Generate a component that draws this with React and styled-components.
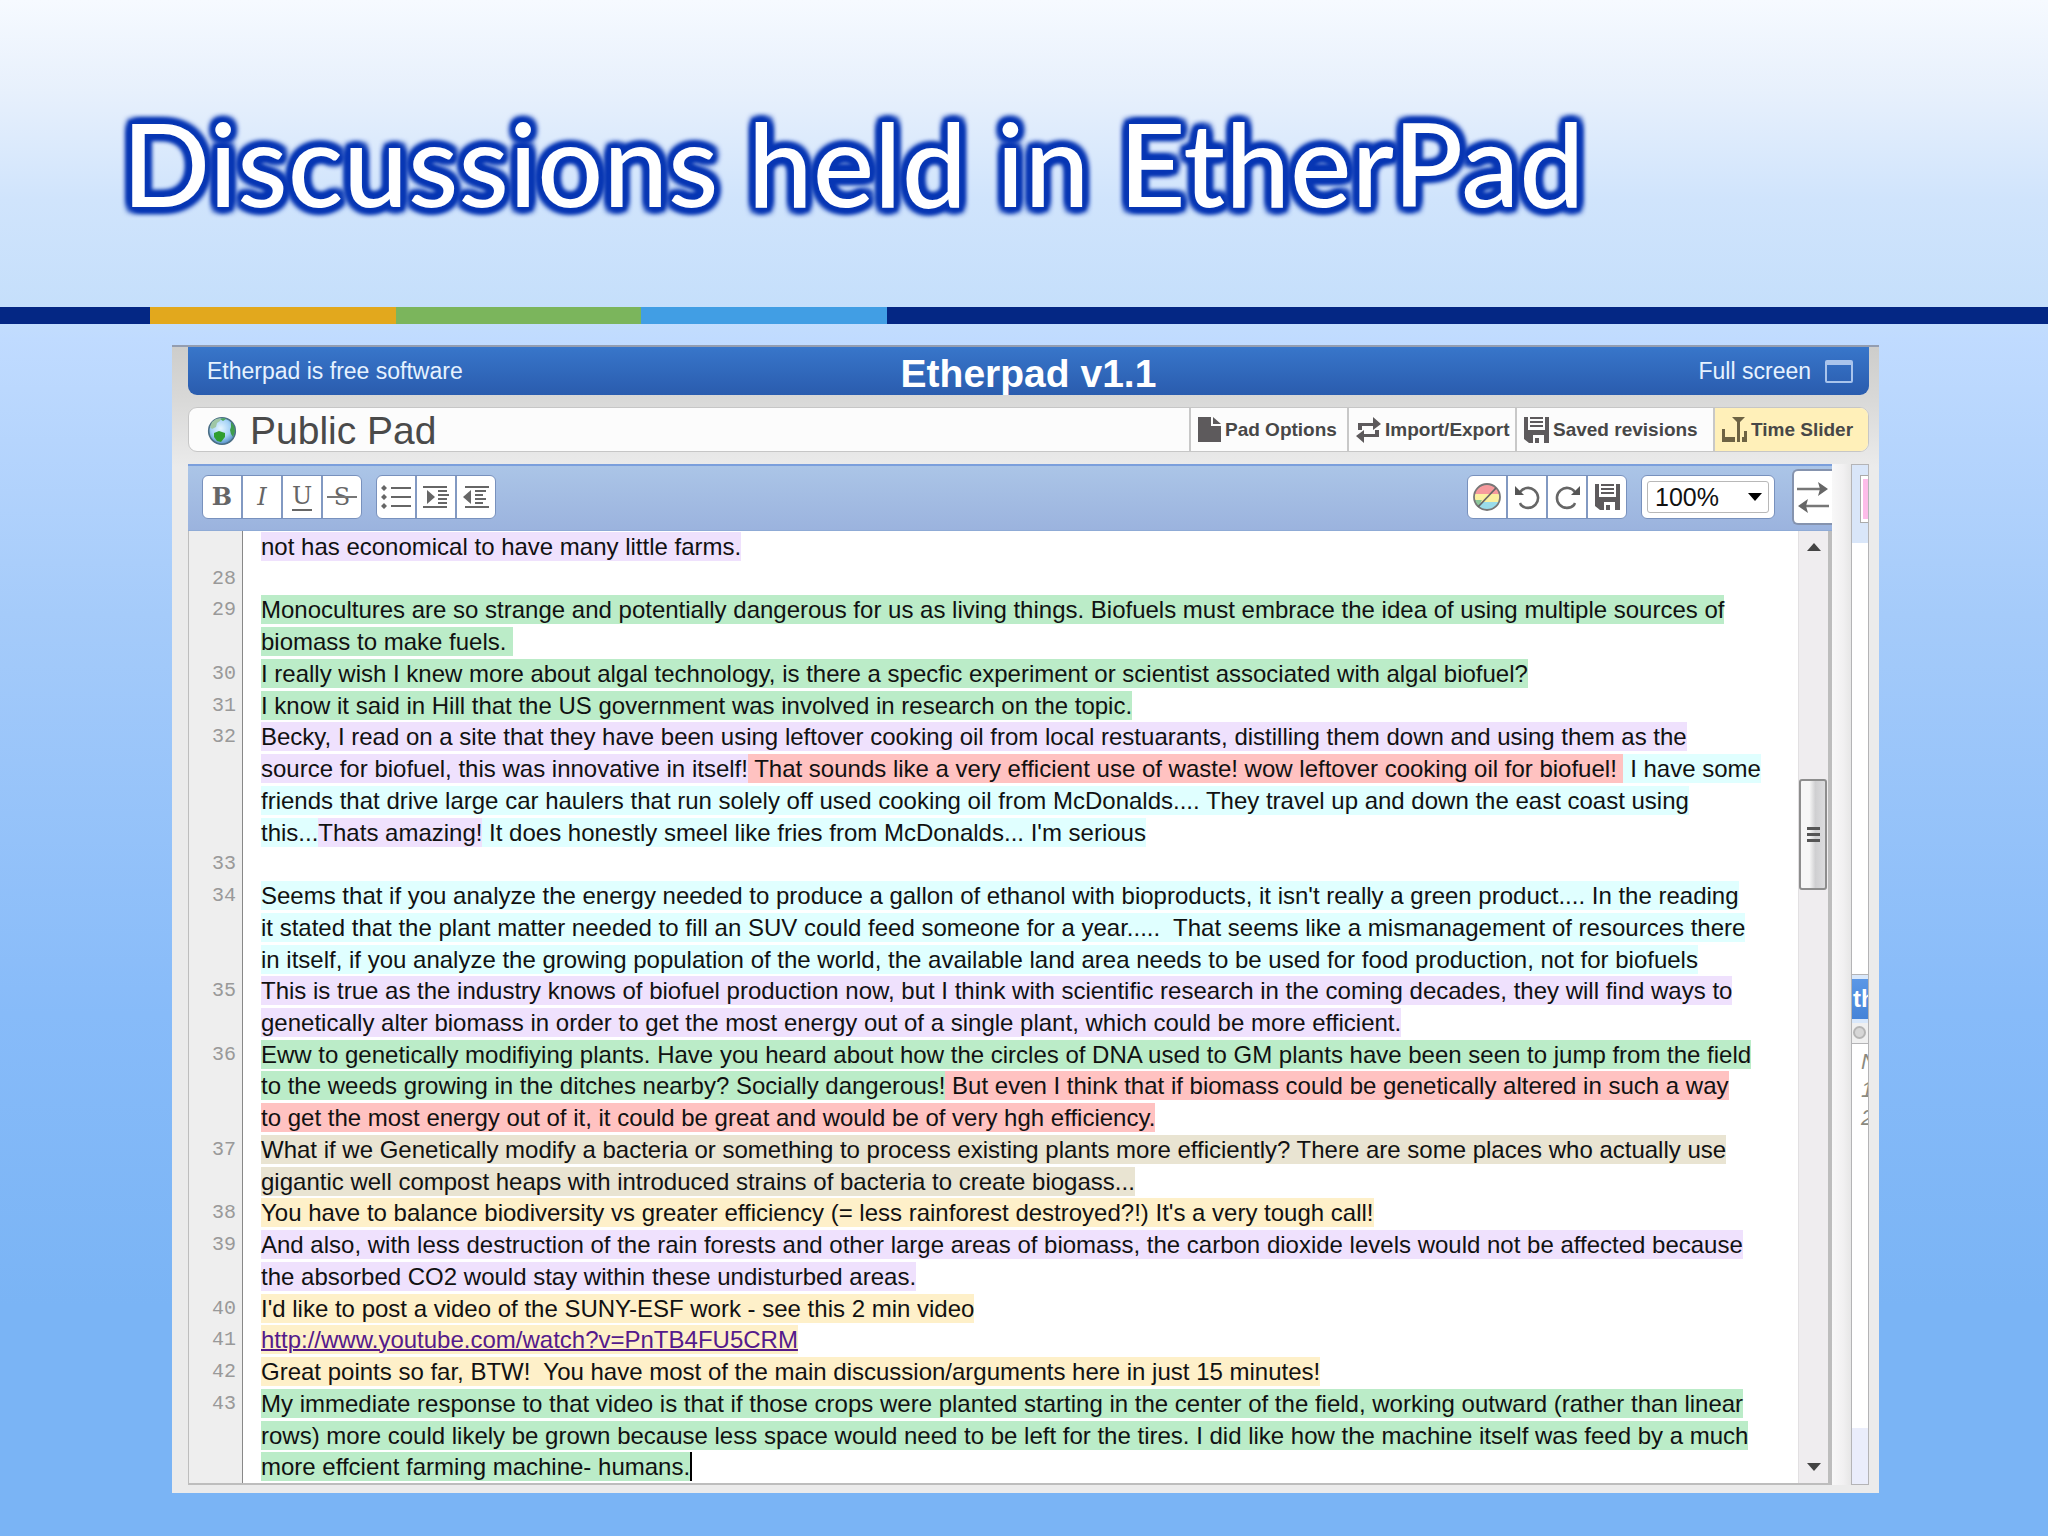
import React from "react";
import styled, { createGlobalStyle } from "styled-components";

const GlobalStyle = createGlobalStyle`
  * {
    box-sizing: border-box;
  }
  body {
    margin: 0;
    font-family: "Liberation Sans", Arial, sans-serif;
  }
  button, select {
    font: inherit;
    color: inherit;
    margin: 0;
    padding: 0;
    border: 0;
    background: none;
    cursor: pointer;
  }
`;

const colors = {
  purple: "#efe1fd",
  green: "#bbecc8",
  red: "#ffc2c1",
  cyan: "#e0ffff",
  beige: "#e9e4d2",
  yellow: "#fef0c9"
};

/* slide */

const Slide = styled.div`
  display: flex;
  flex-direction: column;
  min-height: 100vh;
  background: linear-gradient(
    #f6faff 0%,
    #e7f0fc 6%,
    #d0e4fc 13%,
    #c5dffb 20%,
    #c0dbff 22%,
    #a5cbfa 40%,
    #87bbf9 66%,
    #7ab4f5 85%,
    #7ab4f5 100%
  );
`;

const SlideHeader = styled.header`
  padding: 93px 122px 74px;
`;

const SlideTitle = styled.h1`
  margin: 0;
  font: 500 116px/140px Lato, sans-serif;
  white-space: nowrap;
  color: #fff;
  text-shadow: 6px 0 5px #0837b4, -6px 0 5px #0837b4, 0 6px 5px #0837b4,
    0 -6px 5px #0837b4, 5px 5px 5px #0837b4, -5px 5px 5px #0837b4,
    5px -5px 5px #0837b4, -5px -5px 5px #0837b4, 3px 3px 3px #0837b4,
    -3px -3px 3px #0837b4, 0 0 3px #0837b4;
`;

const Stripe = styled.div`
  display: grid;
  grid-template-columns: 150px 246px 245px 246px 1fr;
  height: 17px;
`;

const StripePart = styled.span`
  background: ${props => props.$color};
`;

/* pad window */

const Pad = styled.main`
  flex: 1;
  display: flex;
  flex-direction: column;
  margin: 21px 169px 43px 172px;
  padding: 0 10px 8px 16px;
  border-top: 2px solid #939db0;
  background: linear-gradient(#cdcdcb 0, #d8d8d7 50px, #ebebeb 120px);
`;

const PadHeader = styled.div`
  display: grid;
  grid-template-columns: 1fr auto 1fr;
  align-items: center;
  height: 48px;
  padding: 0 16px;
  border-radius: 0 0 9px 9px;
  background: linear-gradient(#3876ca, #2a5cae);
  color: #e6f2ff;
  font-size: 23px;
`;

const HeaderLink = styled.a`
  padding-left: 3px;
  color: inherit;
  text-decoration: none;
`;

const PadName = styled.h2`
  margin: 0;
  padding-top: 4px;
  font-size: 39px;
  line-height: 43px;
  color: #fff;
`;

const FullScreen = styled.button`
  justify-self: end;
  display: flex;
  align-items: center;
  gap: 14px;
`;

const TitleBar = styled.div`
  display: flex;
  height: 45px;
  margin: 12px 0;
  border: 1px solid #c6c6c6;
  border-radius: 9px;
  background: #fcfcfc;
  overflow: hidden;
`;

const PadTitle = styled.h3`
  flex: 1;
  display: flex;
  align-items: center;
  gap: 13px;
  margin: 0;
  padding: 2px 0 0 18px;
  font-weight: 400;
  font-size: 39px;
  line-height: 41px;
  color: #4a4a4a;
`;

const TitleButton = styled.button`
  display: flex;
  align-items: center;
  gap: 4px;
  width: ${props => props.$width}px;
  padding-left: 7px;
  border-left: 2px solid #c8c8c8;
  font-weight: 700;
  font-size: 19px;
  white-space: nowrap;
  color: #474747;
  background: ${props => (props.$active ? "#fff0b9" : "transparent")};
`;

const PadBody = styled.div`
  flex: 1;
  display: flex;
`;

const Editor = styled.section`
  flex: 1;
  display: flex;
  flex-direction: column;
`;

const Toolbar = styled.div`
  display: flex;
  align-items: center;
  gap: 14px;
  height: 67px;
  padding: 0 0 2px 14px;
  border-top: 2px solid #7b9fdc;
  border-bottom: 1px solid #8fabd6;
  background: linear-gradient(#abc5e7, #9bb3de);
`;

const Spacer = styled.div`
  flex: 1;
`;

const ButtonGroup = styled.div`
  display: flex;
  height: 44px;
  border: 1px solid #7891bd;
  border-radius: 6px;
  background: #fff;
  overflow: hidden;
`;

const ToolButton = styled.button`
  position: relative;
  display: flex;
  align-items: center;
  justify-content: center;
  width: 38px;
  font-family: "DejaVu Serif", serif;
  font-size: 24px;
  line-height: 30px;
  color: #666;
  & + & {
    width: 40px;
    border-left: 2px solid #8299c2;
  }
`;

const Underlined = styled.span`
  border-bottom: 2px solid #666;
  line-height: 25px;
`;

const StrikeLine = styled.span`
  position: absolute;
  top: 20px;
  left: 4px;
  right: 4px;
  height: 2px;
  background: #777;
`;

const ZoomBox = styled.label`
  display: grid;
  align-items: center;
  width: 134px;
  height: 44px;
  padding: 5px;
  border: 1px solid #7891bd;
  border-radius: 6px;
  background: #fff;
  & > * {
    grid-area: 1 / 1;
  }
`;

const ZoomSelect = styled.select`
  appearance: none;
  width: 100%;
  height: 32px;
  padding-left: 7px;
  border: 1px solid #b8b8b8;
  border-radius: 3px;
  font-size: 25px;
  color: #111;
`;

const ZoomArrow = styled.svg`
  justify-self: end;
  margin-right: 7px;
  pointer-events: none;
`;

const SidebarToggle = styled.button`
  display: flex;
  align-items: center;
  justify-content: center;
  width: 40px;
  height: 56px;
  margin-left: 3px;
  border: 2px solid #8593ae;
  border-right: 0;
  border-radius: 6px 0 0 6px;
  background: #fff;
`;

const Document = styled.div`
  flex: 1;
  display: flex;
  border: 1px solid #bdbdbd;
  border-width: 0 4px 2px 1px;
  background: #fff;
`;

const Lines = styled.div`
  flex: 1;
  display: grid;
  grid-auto-rows: 1fr;
`;

const Line = styled.div`
  display: grid;
  grid-template-columns: 54px 1fr;
`;

const LineNumber = styled.span`
  padding-right: 6px;
  border-right: 1px solid #888;
  background: #eee;
  font-family: "Liberation Mono", monospace;
  font-size: 20px;
  line-height: 31px;
  text-align: right;
  color: #999;
`;

const LineText = styled.div`
  padding-left: 18px;
  font-size: 24px;
  line-height: 31px;
  white-space: pre-wrap;
  color: #111;
`;

const Author = styled.span`
  padding: 1px 0;
  background: ${props => colors[props.$color]};
`;

const VideoLink = styled.a`
  color: #551a8b;
  text-decoration-thickness: 2px;
`;

const Caret = styled.span`
  padding: 1px 0;
  border-left: 2px solid #000;
`;

const Scrollbar = styled.div`
  display: flex;
  flex-direction: column;
  width: 30px;
  border-left: 1px solid #e2e0e2;
  background: #efedef;
`;

const ScrollArrow = styled.button`
  display: flex;
  align-items: center;
  justify-content: center;
  height: 32px;
`;

const Track = styled.div`
  flex: ${props => props.$size};
`;

const Thumb = styled.div`
  display: flex;
  align-items: center;
  justify-content: center;
  width: 28px;
  height: 111px;
  border: 2px solid #8d8d8d;
  border-radius: 3px;
  background: linear-gradient(to right, #f6f6f6 35%, #cfcfd1 60%, #dcdcde);
`;

const Splitter = styled.div`
  width: 19px;
  background: linear-gradient(to right, #f8f8f8, #f1f0f1 60%, #e6e6e6);
`;

/* users and chat, cut off at the window's edge */

const Sidebar = styled.aside`
  display: flex;
  flex-direction: column;
  width: 18px;
  border: 1px solid #b4b4b6;
  background: #fff;
  overflow: hidden;
`;

const UserBox = styled.div`
  height: 78px;
  padding: 10px 0 0 8px;
  background: #d9e6f9;
`;

const Swatch = styled.div`
  height: 48px;
  border: 1px solid #aaa;
  border-right: 0;
  padding: 3px 0 3px 2px;
  background: #fff;
`;

const SwatchColor = styled.div`
  height: 40px;
  background: #fdbce9;
`;

const UserList = styled.div`
  height: 432px;
  border-bottom: 1px solid #b4b4b6;
`;

const ChatHeader = styled.div`
  height: 48px;
  padding-left: 1px;
  border: solid #d9e8fb;
  border-width: 4px 0;
  background: linear-gradient(#5b97e6, #4583d8);
  font-weight: 700;
  font-size: 24px;
  line-height: 40px;
  color: #fff;
`;

const ChatBar = styled.div`
  height: 21px;
  padding: 3px 1px;
  border-bottom: 1px solid #b4b4b6;
  background: #f0f0f0;
`;

const ChatDot = styled.div`
  width: 13px;
  height: 13px;
  border: 2px solid #b5b5b5;
  border-radius: 50%;
  background: #d6d6d6;
`;

const ChatLog = styled.div`
  flex: 1;
  padding: 4px 0 0 9px;
  font-style: italic;
  font-size: 22px;
  line-height: 28px;
  color: #8a8a80;
`;

const ChatInput = styled.div`
  height: 56px;
  background: #eaedfb;
`;

/* icons */

const Globe = () => (
  <svg width="30" height="30" viewBox="0 0 30 30">
    <defs>
      <radialGradient id="sea" cx="0.45" cy="0.4" r="0.6">
        <stop offset="0" stopColor="#e4f5ff" />
        <stop offset="0.6" stopColor="#a5d2f7" />
        <stop offset="1" stopColor="#5590c8" />
      </radialGradient>
    </defs>
    <circle cx="15" cy="15" r="13.3" fill="url(#sea)" stroke="#4b6f86" strokeWidth="1.6" />
    <path d="M3 11 5 6l4-3 5-1-1 3-3 2-1 4-4 2z" fill="#9fc7a6" />
    <path d="M7 17l5-2 6 2v4l-4 5-4-1-3-4z" fill="#2f9e2f" />
    <path d="M24 6l3 4 1 5-2 6-2-3-1-4 1-3z" fill="#3f9d4d" />
    <path d="M13 3l4-1 2 1-3 2z" fill="#4fa65c" />
  </svg>
);

const FileIcon = () => (
  <svg width="23" height="25" viewBox="0 0 23 25" fill="#5d5a5c">
    <path d="M0 0h13v9h10v16H0z" />
    <path d="M15 0l8 7h-8z" />
  </svg>
);

const ExchangeIcon = () => (
  <svg width="25" height="26" viewBox="0 0 25 26" fill="#5d5a5c">
    <path d="M2 6h15V0l8 7-8 6V9H6v4H2z" />
    <path d="M23 20H8v6l-8-7 8-6v4h11v-4h4z" />
  </svg>
);

const SaveIcon = () => (
  <svg width="25" height="26" viewBox="0 0 25 26" fill="#5d5a5c">
    <path d="M0 0h4v13h17V0h4v26h-5v-8H9v8H5l-5-4z" />
    <path d="M6 0h13v2H6zM6 4h13v2H6zM6 8h13v2H6zM11 21h4v5h-4z" />
  </svg>
);

const SliderIcon = () => (
  <svg width="25" height="26" viewBox="0 0 25 26" fill="#6d6344">
    <path d="M10 0h13l-5 5v20h-3V5z" />
    <path d="M0 12h3v8h10v5H0zM22 14h3v11h-5v-5h2z" />
  </svg>
);

const WindowIcon = () => (
  <svg width="28" height="23" viewBox="0 0 28 23" fill="none" stroke="#a9c4ec">
    <rect x="1" y="1" width="26" height="21" rx="1" strokeWidth="2" />
    <path d="M1 3h26" strokeWidth="4" />
  </svg>
);

const ListIcon = () => (
  <svg width="30" height="26" viewBox="0 0 30 26" fill="#666">
    <path d="M10 3h20v2H10zM10 12h20v2H10zM10 21h20v2H10z" />
    <path d="M3 1l3 3-3 3-3-3zM3 10l3 3-3 3-3-3zM3 19l3 3-3 3-3-3z" />
  </svg>
);

const IndentIcon = () => (
  <svg width="26" height="22" viewBox="0 0 26 22" fill="#666">
    <path d="M0 0h24v2H0zM0 20h24v2H0zM15 4h9v2h-9zM15 8h11v2H15zM15 12h9v2h-9zM15 16h9v2h-9z" />
    <path d="M4 4l8 7-8 7z" />
  </svg>
);

const OutdentIcon = () => (
  <svg width="26" height="22" viewBox="0 0 26 22" fill="#666">
    <path d="M2 0h24v2H2zM2 20h24v2H2zM12 4h11v2H12zM12 8h8v2h-8zM12 12h11v2H12zM12 16h8v2h-8z" />
    <path d="M8 4l-8 7 8 7z" />
  </svg>
);

const ColorsIcon = () => (
  <svg width="28" height="28" viewBox="0 0 28 28">
    <clipPath id="disc">
      <circle cx="14" cy="14" r="13" />
    </clipPath>
    <g clipPath="url(#disc)">
      <path d="M0 0h28v11H0z" fill="#f69a9d" />
      <path d="M0 11h28v8H0z" fill="#fbf0a0" />
      <path d="M0 19h28v9H0z" fill="#9adcea" />
      <path d="M0 17h9l-4 8H0z" fill="#8cc79a" />
    </g>
    <circle cx="14" cy="14" r="13" fill="none" stroke="#777" strokeWidth="1.8" />
    <path d="M5 24 23 5" stroke="#666" strokeWidth="1.8" />
  </svg>
);

const UndoIcon = () => (
  <svg width="25" height="25" viewBox="0 0 25 25">
    <path d="M5 7a10 10 0 1 1 1 13l-1-2" fill="none" stroke="#666" strokeWidth="2.6" />
    <path d="M0 1v9h9z" fill="#555" />
  </svg>
);

const RedoIcon = () => (
  <svg width="25" height="25" viewBox="0 0 25 25">
    <path d="M20 7a10 10 0 1 0-1 13l1-2" fill="none" stroke="#666" strokeWidth="2.6" />
    <path d="M25 1v9h-9z" fill="#555" />
  </svg>
);

const ToggleIcon = () => (
  <svg width="32" height="32" viewBox="0 0 32 32">
    <path d="M0 8h24M8 25h24" stroke="#777" strokeWidth="2.6" />
    <path d="M21 1l10 7-10 7 2-7zM11 18L1 25l10 7-2-7z" fill="#666" />
  </svg>
);

const UpIcon = () => (
  <svg width="14" height="8" viewBox="0 0 14 8">
    <path d="M7 0l7 8H0z" fill="#444" />
  </svg>
);

const DownIcon = () => (
  <svg width="14" height="8" viewBox="0 0 14 8">
    <path d="M0 0h14L7 8z" fill="#444" />
  </svg>
);

const GripIcon = () => (
  <svg width="13" height="16" viewBox="0 0 13 16" fill="#555">
    <path d="M0 0h13v3H0zM0 6h13v3H0zM0 12h13v3H0z" />
  </svg>
);

/* each row is [number, [author color, text], ...] */
const rows = [
  [null, ["purple", "not has economical to have many little farms."]],
  [28],
  [29, ["green", "Monocultures are so strange and potentially dangerous for us as living things. Biofuels must embrace the idea of using multiple sources of"]],
  [null, ["green", "biomass to make fuels. "]],
  [30, ["green", "I really wish I knew more about algal technology, is there a specfic experiment or scientist associated with algal biofuel?"]],
  [31, ["green", "I know it said in Hill that the US government was involved in research on the topic."]],
  [32, ["purple", "Becky, I read on a site that they have been using leftover cooking oil from local restuarants, distilling them down and using them as the"]],
  [
    null,
    ["purple", "source for biofuel, this was innovative in itself!"],
    ["red", " That sounds like a very efficient use of waste! wow leftover cooking oil for biofuel! "],
    ["cyan", " I have some"]
  ],
  [null, ["cyan", "friends that drive large car haulers that run solely off used cooking oil from McDonalds.... They travel up and down the east coast using"]],
  [
    null,
    ["cyan", "this..."],
    ["purple", "Thats amazing!"],
    ["cyan", " It does honestly smeel like fries from McDonalds... I'm serious"]
  ],
  [33],
  [34, ["cyan", "Seems that if you analyze the energy needed to produce a gallon of ethanol with bioproducts, it isn't really a green product.... In the reading"]],
  [null, ["cyan", "it stated that the plant matter needed to fill an SUV could feed someone for a year.....  That seems like a mismanagement of resources there"]],
  [null, ["cyan", "in itself, if you analyze the growing population of the world, the available land area needs to be used for food production, not for biofuels"]],
  [35, ["purple", "This is true as the industry knows of biofuel production now, but I think with scientific research in the coming decades, they will find ways to"]],
  [null, ["purple", "genetically alter biomass in order to get the most energy out of a single plant, which could be more efficient."]],
  [36, ["green", "Eww to genetically modifiying plants. Have you heard about how the circles of DNA used to GM plants have been seen to jump from the field"]],
  [
    null,
    ["green", "to the weeds growing in the ditches nearby? Socially dangerous!"],
    ["red", " But even I think that if biomass could be genetically altered in such a way"]
  ],
  [null, ["red", "to get the most energy out of it, it could be great and would be of very hgh efficiency."]],
  [37, ["beige", "What if we Genetically modify a bacteria or something to process existing plants more efficiently? There are some places who actually use"]],
  [null, ["beige", "gigantic well compost heaps with introduced strains of bacteria to create biogass..."]],
  [38, ["yellow", "You have to balance biodiversity vs greater efficiency (= less rainforest destroyed?!) It's a very tough call!"]],
  [39, ["purple", "And also, with less destruction of the rain forests and other large areas of biomass, the carbon dioxide levels would not be affected because"]],
  [null, ["purple", "the absorbed CO2 would stay within these undisturbed areas."]],
  [40, ["yellow", "I'd like to post a video of the SUNY-ESF work - see this 2 min video"]],
  [41, ["yellow", "http://www.youtube.com/watch?v=PnTB4FU5CRM"]],
  [42, ["yellow", "Great points so far, BTW!  You have most of the main discussion/arguments here in just 15 minutes!"]],
  [43, ["green", "My immediate response to that video is that if those crops were planted starting in the center of the field, working outward (rather than linear"]],
  [null, ["green", "rows) more could likely be grown because less space would need to be left for the tires. I did like how the machine itself was feed by a much"]],
  [null, ["green", "more effcient farming machine- humans."]]
];

const PadDocument = () => (
  <Lines>
    {rows.map(([number, ...parts], i) => (
      <Line key={i}>
        <LineNumber>{number}</LineNumber>
        <LineText>
          {parts.map(([color, text]) => (
            <Author key={text} $color={color}>
              {text.startsWith("http") ? <VideoLink href={text}>{text}</VideoLink> : text}
            </Author>
          ))}
          {i === rows.length - 1 && <Caret />}
        </LineText>
      </Line>
    ))}
  </Lines>
);

const PadToolbar = () => (
  <Toolbar>
    <ButtonGroup>
      <ToolButton aria-label="Bold">
        <b>B</b>
      </ToolButton>
      <ToolButton aria-label="Italic">
        <i>I</i>
      </ToolButton>
      <ToolButton aria-label="Underline">
        <Underlined>U</Underlined>
      </ToolButton>
      <ToolButton aria-label="Strikethrough">
        S<StrikeLine />
      </ToolButton>
    </ButtonGroup>
    <ButtonGroup>
      <ToolButton aria-label="Bullet list">
        <ListIcon />
      </ToolButton>
      <ToolButton aria-label="Indent">
        <IndentIcon />
      </ToolButton>
      <ToolButton aria-label="Outdent">
        <OutdentIcon />
      </ToolButton>
    </ButtonGroup>
    <Spacer />
    <ButtonGroup>
      <ToolButton aria-label="Clear authorship colors">
        <ColorsIcon />
      </ToolButton>
      <ToolButton aria-label="Undo">
        <UndoIcon />
      </ToolButton>
      <ToolButton aria-label="Redo">
        <RedoIcon />
      </ToolButton>
      <ToolButton aria-label="Save revision">
        <SaveIcon />
      </ToolButton>
    </ButtonGroup>
    <ZoomBox>
      <ZoomSelect aria-label="Zoom" defaultValue="100%">
        <option>100%</option>
      </ZoomSelect>
      <ZoomArrow width="14" height="8" viewBox="0 0 14 8">
        <path d="M0 0h14L7 8z" />
      </ZoomArrow>
    </ZoomBox>
    <SidebarToggle aria-label="Toggle sidebar">
      <ToggleIcon />
    </SidebarToggle>
  </Toolbar>
);

const App = () => (
  <Slide>
    <GlobalStyle />
    <SlideHeader>
      <SlideTitle>Discussions held in EtherPad</SlideTitle>
    </SlideHeader>
    <Stripe>
      {["#042784", "#e2a81d", "#7bb55c", "#419ee4", "#042784"].map((color, i) => (
        <StripePart key={i} $color={color} />
      ))}
    </Stripe>
    <Pad>
      <PadHeader>
        <HeaderLink href="#about">Etherpad is free software</HeaderLink>
        <PadName>Etherpad v1.1</PadName>
        <FullScreen>
          Full screen
          <WindowIcon />
        </FullScreen>
      </PadHeader>
      <TitleBar>
        <PadTitle>
          <Globe />
          Public Pad
        </PadTitle>
        <TitleButton $width={158}>
          <FileIcon />
          Pad Options
        </TitleButton>
        <TitleButton $width={168}>
          <ExchangeIcon />
          Import/Export
        </TitleButton>
        <TitleButton $width={198}>
          <SaveIcon />
          Saved revisions
        </TitleButton>
        <TitleButton $width={155} $active>
          <SliderIcon />
          Time Slider
        </TitleButton>
      </TitleBar>
      <PadBody>
        <Editor>
          <PadToolbar />
          <Document>
            <PadDocument />
            <Scrollbar>
              <ScrollArrow aria-label="Scroll up">
                <UpIcon />
              </ScrollArrow>
              <Track $size={217} />
              <Thumb>
                <GripIcon />
              </Thumb>
              <Track $size={563} />
              <ScrollArrow aria-label="Scroll down">
                <DownIcon />
              </ScrollArrow>
            </Scrollbar>
          </Document>
        </Editor>
        <Splitter />
        <Sidebar>
          <UserBox>
            <Swatch>
              <SwatchColor />
            </Swatch>
          </UserBox>
          <UserList />
          <ChatHeader>th</ChatHeader>
          <ChatBar>
            <ChatDot />
          </ChatBar>
          <ChatLog>
            <div>N</div>
            <div>1</div>
            <div>2</div>
          </ChatLog>
          <ChatInput />
        </Sidebar>
      </PadBody>
    </Pad>
  </Slide>
);

export default App;
